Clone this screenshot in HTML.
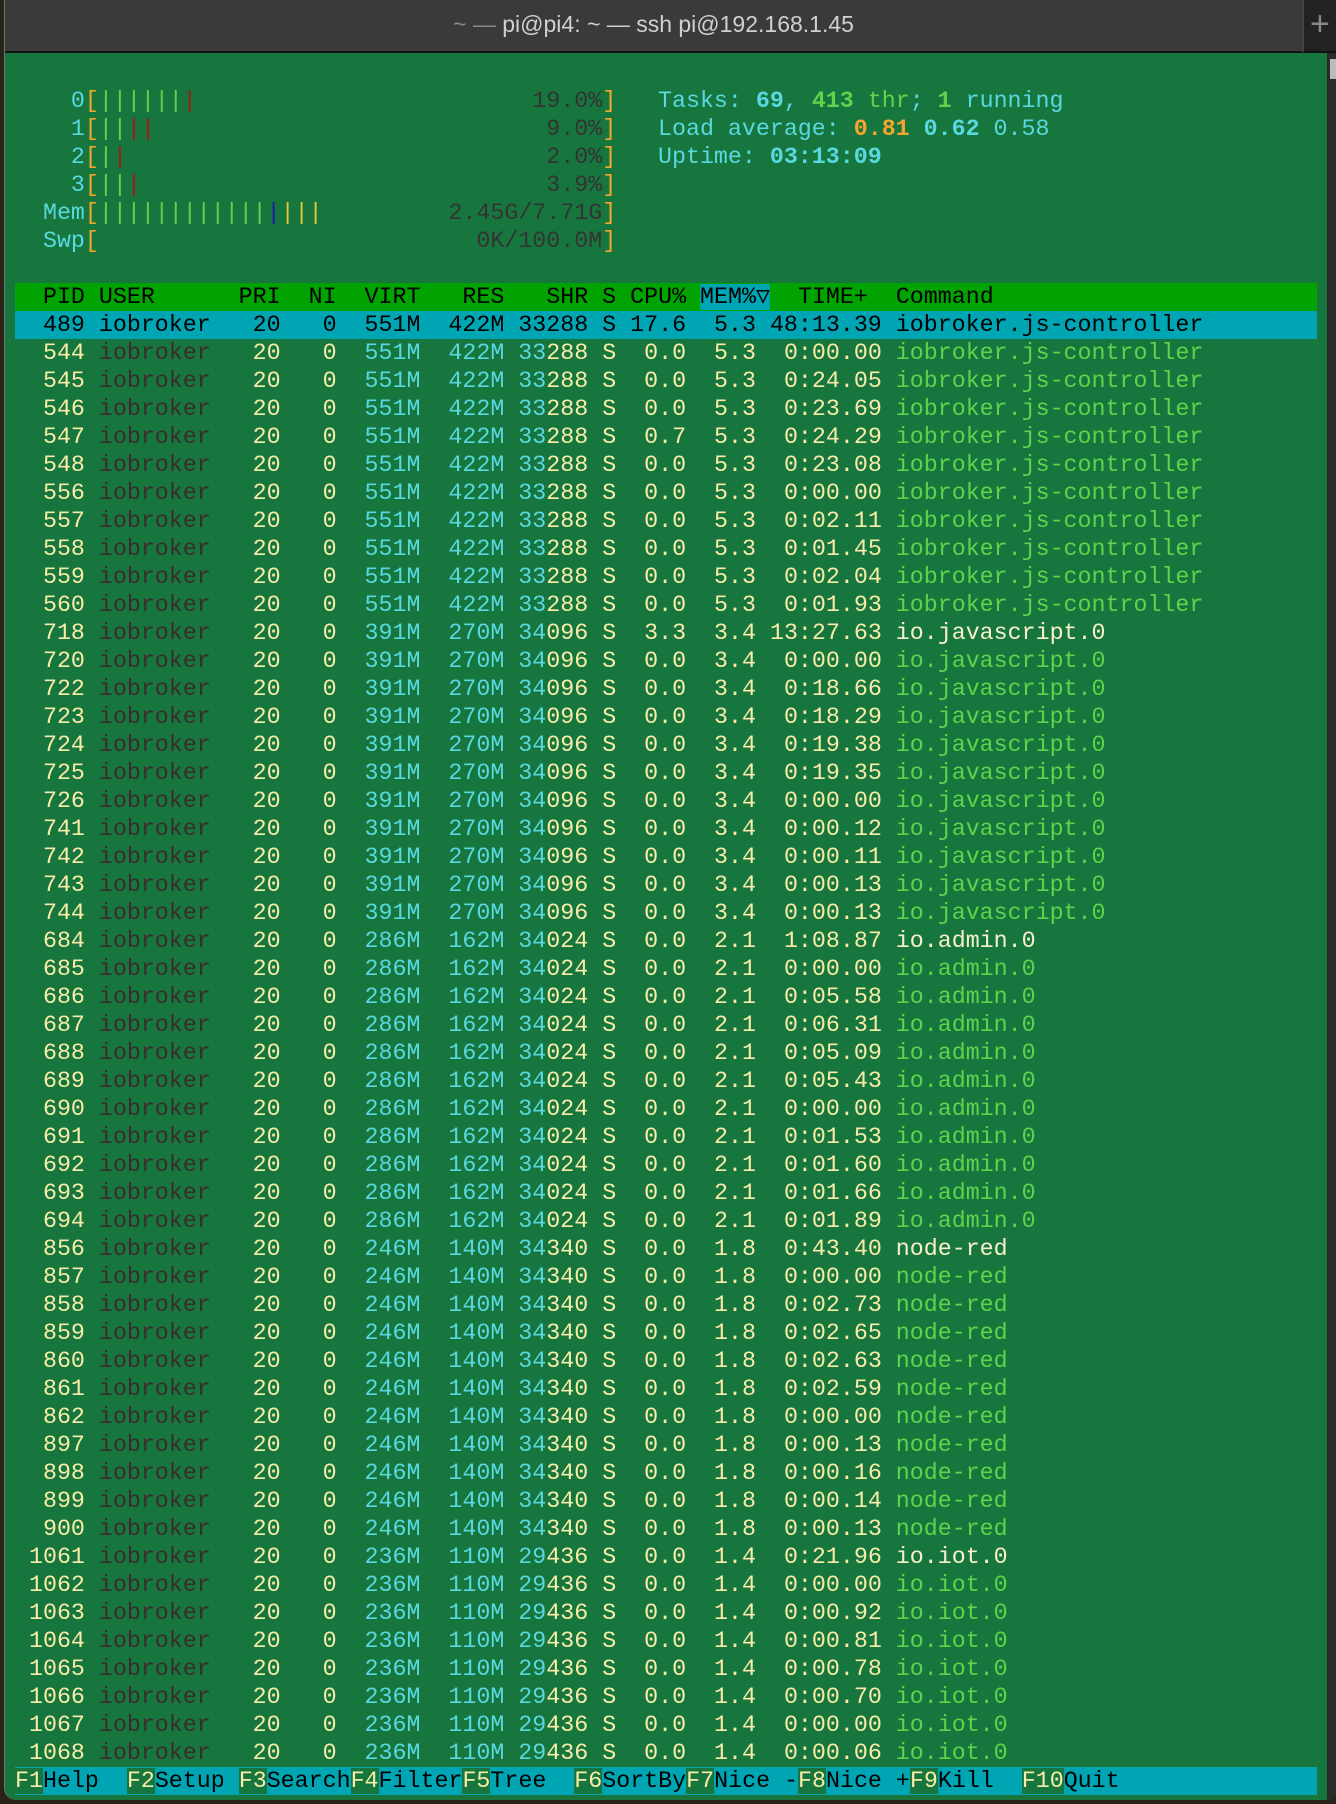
<!DOCTYPE html>
<html><head><meta charset="utf-8"><style>
*{margin:0;padding:0}
body{width:1336px;height:1804px;background:#2a2418;position:relative;overflow:hidden;font-family:"Liberation Mono","DejaVu Sans Mono",monospace}
#win{position:absolute;left:4px;top:0;width:1332px;height:1800px;background:#17763e;border-radius:0 0 12px 12px;border-left:1px solid #6a7a6e;overflow:hidden}
#title{position:absolute;left:0;top:0;width:1297px;height:51px;background:#3a3a3a;border-bottom:2px solid #111;font-family:"Liberation Sans",sans-serif;font-size:23px;color:#d0d0d0;text-align:center;line-height:48px}
#title .dim{color:#8a8a8a}
#tab{position:absolute;left:1297px;top:0;width:40px;height:51px;background:#222;border-left:2px solid #444;border-bottom:2px solid #111;color:#888;font-family:"Liberation Sans",sans-serif;font-size:34px;line-height:48px;padding-left:6px}
#sb{position:absolute;left:1322px;top:53px;width:14px;height:1747px;background:#2b2b2b}
#sb i{position:absolute;left:3px;top:6px;width:6px;height:20px;background:#bbb}
.t{position:absolute;left:10px;font-size:23.3px;line-height:28px;color:#f8eda8}
.t div{height:28px;white-space:pre}
.y{color:#f8eda8}.d{color:#3a2c2c}.c{color:#5ad8e0}.g{color:#5fd34b}.w{color:#f7f1c9}.o{color:#f5a62c}.r{color:#a31818}.b{color:#1a1aa8}.k{color:#333}
.bo{font-weight:bold}
.hdr{background:#00a300;color:#000;width:1302px}
.sel{background:#00a5b4;color:#000;width:1302px}
.fb{background:#00a5b4;color:#000;width:1302px}
.fb .f{background:#17763e;color:#f8eda8}
.mem{background:#00a5b4}
</style></head><body>
<div id="win">
<div id="title"><span class="dim">~ — </span>pi@pi4: ~ — ssh pi@192.168.1.45</div>
<div id="tab">+</div>
<div id="sb"><i></i></div>
<div class="t" style="top:87px">
<div><span class="c">    0</span><span class="o">[</span><span class="g">||||||</span><span class="r">|</span>                        <span class="k">19.0%</span><span class="o">]</span></div>
<div><span class="c">    1</span><span class="o">[</span><span class="g">||</span><span class="r">||</span>                            <span class="k">9.0%</span><span class="o">]</span></div>
<div><span class="c">    2</span><span class="o">[</span><span class="g">|</span><span class="r">|</span>                              <span class="k">2.0%</span><span class="o">]</span></div>
<div><span class="c">    3</span><span class="o">[</span><span class="g">||</span><span class="r">|</span>                             <span class="k">3.9%</span><span class="o">]</span></div>
<div><span class="c">  Mem</span><span class="o">[</span><span class="g">||||||||||||</span><span class="b">|</span><span style="color:#e6c63a">|||</span>         <span class="k">2.45G/7.71G</span><span class="o">]</span></div>
<div><span class="c">  Swp</span><span class="o">[</span>                           <span class="k">0K/100.0M</span><span class="o">]</span></div>
<div> </div>
<div class="hdr">  PID USER      PRI  NI  VIRT   RES   SHR S CPU% <span class="mem">MEM%▽</span>  TIME+  Command</div>
<div class="sel">  489 iobroker   20   0  551M  422M 33288 S 17.6  5.3 48:13.39 iobroker.js-controller</div>
<div>  544 <span class="d">iobroker</span>   20   0<span class="c">  551M  422M 33</span>288 S  0.0  5.3  0:00.00 <span class="g">iobroker.js-controller</span></div>
<div>  545 <span class="d">iobroker</span>   20   0<span class="c">  551M  422M 33</span>288 S  0.0  5.3  0:24.05 <span class="g">iobroker.js-controller</span></div>
<div>  546 <span class="d">iobroker</span>   20   0<span class="c">  551M  422M 33</span>288 S  0.0  5.3  0:23.69 <span class="g">iobroker.js-controller</span></div>
<div>  547 <span class="d">iobroker</span>   20   0<span class="c">  551M  422M 33</span>288 S  0.7  5.3  0:24.29 <span class="g">iobroker.js-controller</span></div>
<div>  548 <span class="d">iobroker</span>   20   0<span class="c">  551M  422M 33</span>288 S  0.0  5.3  0:23.08 <span class="g">iobroker.js-controller</span></div>
<div>  556 <span class="d">iobroker</span>   20   0<span class="c">  551M  422M 33</span>288 S  0.0  5.3  0:00.00 <span class="g">iobroker.js-controller</span></div>
<div>  557 <span class="d">iobroker</span>   20   0<span class="c">  551M  422M 33</span>288 S  0.0  5.3  0:02.11 <span class="g">iobroker.js-controller</span></div>
<div>  558 <span class="d">iobroker</span>   20   0<span class="c">  551M  422M 33</span>288 S  0.0  5.3  0:01.45 <span class="g">iobroker.js-controller</span></div>
<div>  559 <span class="d">iobroker</span>   20   0<span class="c">  551M  422M 33</span>288 S  0.0  5.3  0:02.04 <span class="g">iobroker.js-controller</span></div>
<div>  560 <span class="d">iobroker</span>   20   0<span class="c">  551M  422M 33</span>288 S  0.0  5.3  0:01.93 <span class="g">iobroker.js-controller</span></div>
<div>  718 <span class="d">iobroker</span>   20   0<span class="c">  391M  270M 34</span>096 S  3.3  3.4 13:27.63 <span class="w">io.javascript.0</span></div>
<div>  720 <span class="d">iobroker</span>   20   0<span class="c">  391M  270M 34</span>096 S  0.0  3.4  0:00.00 <span class="g">io.javascript.0</span></div>
<div>  722 <span class="d">iobroker</span>   20   0<span class="c">  391M  270M 34</span>096 S  0.0  3.4  0:18.66 <span class="g">io.javascript.0</span></div>
<div>  723 <span class="d">iobroker</span>   20   0<span class="c">  391M  270M 34</span>096 S  0.0  3.4  0:18.29 <span class="g">io.javascript.0</span></div>
<div>  724 <span class="d">iobroker</span>   20   0<span class="c">  391M  270M 34</span>096 S  0.0  3.4  0:19.38 <span class="g">io.javascript.0</span></div>
<div>  725 <span class="d">iobroker</span>   20   0<span class="c">  391M  270M 34</span>096 S  0.0  3.4  0:19.35 <span class="g">io.javascript.0</span></div>
<div>  726 <span class="d">iobroker</span>   20   0<span class="c">  391M  270M 34</span>096 S  0.0  3.4  0:00.00 <span class="g">io.javascript.0</span></div>
<div>  741 <span class="d">iobroker</span>   20   0<span class="c">  391M  270M 34</span>096 S  0.0  3.4  0:00.12 <span class="g">io.javascript.0</span></div>
<div>  742 <span class="d">iobroker</span>   20   0<span class="c">  391M  270M 34</span>096 S  0.0  3.4  0:00.11 <span class="g">io.javascript.0</span></div>
<div>  743 <span class="d">iobroker</span>   20   0<span class="c">  391M  270M 34</span>096 S  0.0  3.4  0:00.13 <span class="g">io.javascript.0</span></div>
<div>  744 <span class="d">iobroker</span>   20   0<span class="c">  391M  270M 34</span>096 S  0.0  3.4  0:00.13 <span class="g">io.javascript.0</span></div>
<div>  684 <span class="d">iobroker</span>   20   0<span class="c">  286M  162M 34</span>024 S  0.0  2.1  1:08.87 <span class="w">io.admin.0</span></div>
<div>  685 <span class="d">iobroker</span>   20   0<span class="c">  286M  162M 34</span>024 S  0.0  2.1  0:00.00 <span class="g">io.admin.0</span></div>
<div>  686 <span class="d">iobroker</span>   20   0<span class="c">  286M  162M 34</span>024 S  0.0  2.1  0:05.58 <span class="g">io.admin.0</span></div>
<div>  687 <span class="d">iobroker</span>   20   0<span class="c">  286M  162M 34</span>024 S  0.0  2.1  0:06.31 <span class="g">io.admin.0</span></div>
<div>  688 <span class="d">iobroker</span>   20   0<span class="c">  286M  162M 34</span>024 S  0.0  2.1  0:05.09 <span class="g">io.admin.0</span></div>
<div>  689 <span class="d">iobroker</span>   20   0<span class="c">  286M  162M 34</span>024 S  0.0  2.1  0:05.43 <span class="g">io.admin.0</span></div>
<div>  690 <span class="d">iobroker</span>   20   0<span class="c">  286M  162M 34</span>024 S  0.0  2.1  0:00.00 <span class="g">io.admin.0</span></div>
<div>  691 <span class="d">iobroker</span>   20   0<span class="c">  286M  162M 34</span>024 S  0.0  2.1  0:01.53 <span class="g">io.admin.0</span></div>
<div>  692 <span class="d">iobroker</span>   20   0<span class="c">  286M  162M 34</span>024 S  0.0  2.1  0:01.60 <span class="g">io.admin.0</span></div>
<div>  693 <span class="d">iobroker</span>   20   0<span class="c">  286M  162M 34</span>024 S  0.0  2.1  0:01.66 <span class="g">io.admin.0</span></div>
<div>  694 <span class="d">iobroker</span>   20   0<span class="c">  286M  162M 34</span>024 S  0.0  2.1  0:01.89 <span class="g">io.admin.0</span></div>
<div>  856 <span class="d">iobroker</span>   20   0<span class="c">  246M  140M 34</span>340 S  0.0  1.8  0:43.40 <span class="w">node-red</span></div>
<div>  857 <span class="d">iobroker</span>   20   0<span class="c">  246M  140M 34</span>340 S  0.0  1.8  0:00.00 <span class="g">node-red</span></div>
<div>  858 <span class="d">iobroker</span>   20   0<span class="c">  246M  140M 34</span>340 S  0.0  1.8  0:02.73 <span class="g">node-red</span></div>
<div>  859 <span class="d">iobroker</span>   20   0<span class="c">  246M  140M 34</span>340 S  0.0  1.8  0:02.65 <span class="g">node-red</span></div>
<div>  860 <span class="d">iobroker</span>   20   0<span class="c">  246M  140M 34</span>340 S  0.0  1.8  0:02.63 <span class="g">node-red</span></div>
<div>  861 <span class="d">iobroker</span>   20   0<span class="c">  246M  140M 34</span>340 S  0.0  1.8  0:02.59 <span class="g">node-red</span></div>
<div>  862 <span class="d">iobroker</span>   20   0<span class="c">  246M  140M 34</span>340 S  0.0  1.8  0:00.00 <span class="g">node-red</span></div>
<div>  897 <span class="d">iobroker</span>   20   0<span class="c">  246M  140M 34</span>340 S  0.0  1.8  0:00.13 <span class="g">node-red</span></div>
<div>  898 <span class="d">iobroker</span>   20   0<span class="c">  246M  140M 34</span>340 S  0.0  1.8  0:00.16 <span class="g">node-red</span></div>
<div>  899 <span class="d">iobroker</span>   20   0<span class="c">  246M  140M 34</span>340 S  0.0  1.8  0:00.14 <span class="g">node-red</span></div>
<div>  900 <span class="d">iobroker</span>   20   0<span class="c">  246M  140M 34</span>340 S  0.0  1.8  0:00.13 <span class="g">node-red</span></div>
<div> 1061 <span class="d">iobroker</span>   20   0<span class="c">  236M  110M 29</span>436 S  0.0  1.4  0:21.96 <span class="w">io.iot.0</span></div>
<div> 1062 <span class="d">iobroker</span>   20   0<span class="c">  236M  110M 29</span>436 S  0.0  1.4  0:00.00 <span class="g">io.iot.0</span></div>
<div> 1063 <span class="d">iobroker</span>   20   0<span class="c">  236M  110M 29</span>436 S  0.0  1.4  0:00.92 <span class="g">io.iot.0</span></div>
<div> 1064 <span class="d">iobroker</span>   20   0<span class="c">  236M  110M 29</span>436 S  0.0  1.4  0:00.81 <span class="g">io.iot.0</span></div>
<div> 1065 <span class="d">iobroker</span>   20   0<span class="c">  236M  110M 29</span>436 S  0.0  1.4  0:00.78 <span class="g">io.iot.0</span></div>
<div> 1066 <span class="d">iobroker</span>   20   0<span class="c">  236M  110M 29</span>436 S  0.0  1.4  0:00.70 <span class="g">io.iot.0</span></div>
<div> 1067 <span class="d">iobroker</span>   20   0<span class="c">  236M  110M 29</span>436 S  0.0  1.4  0:00.00 <span class="g">io.iot.0</span></div>
<div> 1068 <span class="d">iobroker</span>   20   0<span class="c">  236M  110M 29</span>436 S  0.0  1.4  0:00.06 <span class="g">io.iot.0</span></div>
<div class="fb"><span class="f">F1</span>Help  <span class="f">F2</span>Setup <span class="f">F3</span>Search<span class="f">F4</span>Filter<span class="f">F5</span>Tree  <span class="f">F6</span>SortBy<span class="f">F7</span>Nice -<span class="f">F8</span>Nice +<span class="f">F9</span>Kill  <span class="f">F10</span>Quit</div>
</div>
<div class="t c" style="top:87px;left:653px">
<div>Tasks: <span class="bo">69</span>, <span class="g bo">413</span><span class="g"> thr</span>; <span class="g bo">1</span> running</div>
<div>Load average: <span class="o bo">0.81</span> <span class="bo">0.62</span> 0.58</div>
<div>Uptime: <span class="bo">03:13:09</span></div>
</div>
</div>
</body></html>
